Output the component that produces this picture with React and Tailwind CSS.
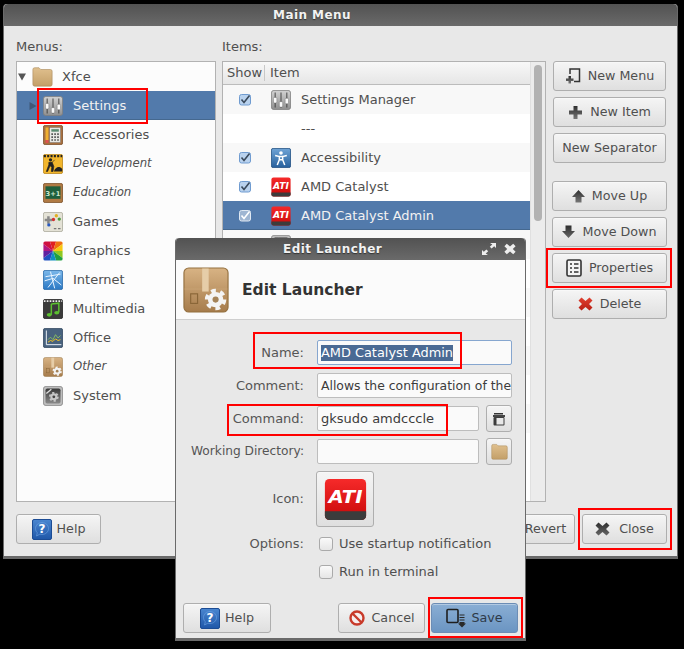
import React from "react";

const Sliders = ({ s = 20 }) => (
  <svg width={s} height={s} viewBox="0 0 24 24">
    <defs><linearGradient id="sl" x1="0" y1="0" x2="0" y2="1"><stop offset="0" stopColor="#d2d2d2" /><stop offset="1" stopColor="#8f8f8f" /></linearGradient></defs>
    <rect x="0.5" y="0.5" width="23" height="23" rx="3" fill="url(#sl)" stroke="#808080" />
    <g stroke="#3c3c3c" strokeWidth="1.1"><path d="M5 3v18M12 3v18M19 3v18" /></g>
    <g fill="#fafafa" stroke="#666" strokeWidth=".5"><rect x="3" y="9" width="4" height="6.500" rx="1" /><rect x="10" y="14" width="4" height="6.500" rx="1" /><rect x="17" y="10" width="4" height="6.500" rx="1" /></g>
  </svg>
);
const Folder = ({ s = 21 }) => (
  <svg width={s} height={s} viewBox="0 0 24 24">
    <defs><linearGradient id="fo" x1="0" y1="0" x2="0" y2="1"><stop offset="0" stopColor="#e0c08e" /><stop offset="1" stopColor="#c39f68" /></linearGradient></defs>
    <path d="M1 4a2 2 0 012-2h5l2 2h11a2 2 0 012 2v15a2 2 0 01-2 2H3a2 2 0 01-2-2z" fill="url(#fo)" stroke="#a98a5c" strokeWidth=".7" />
  </svg>
);
const Accessories = () => (
  <svg width="20" height="20" viewBox="0 0 24 24">
    <rect x=".5" y=".5" width="23" height="23" rx="2" fill="#a8703f" stroke="#7c4f2a" />
    <rect x="8" y="3" width="13" height="18" fill="#e8e8e4" stroke="#666" strokeWidth=".5" />
    <rect x="10" y="5" width="9" height="3" fill="#5a8a70" />
    <path d="M10 10h2v2h-2zM13.5 10h2v2h-2zM17 10h2v2h-2zM10 13.5h2v2h-2zM13.5 13.5h2v2h-2zM17 13.5h2v2h-2zM10 17h2v2h-2zM13.5 17h2v2h-2zM17 17h2v2h-2z" fill="#555" />
    <rect x="3" y="3" width="3.5" height="15" fill="#f0b030" /><rect x="3" y="18" width="3.5" height="3.5" fill="#e05050" />
  </svg>
);
const Development = () => (
  <svg width="20" height="20" viewBox="0 0 24 24">
    <rect x=".5" y=".5" width="23" height="23" rx="2" fill="#f2b62c" stroke="#b8841a" />
    <path d="M1 2.500h22" stroke="#222" strokeWidth="2.500" strokeDasharray="2.500 1.500" />
    <circle cx="9" cy="7" r="2" fill="#222" />
    <path d="M7 10l4 0 2 5-1 6h-2l.5-5-2-2-3 7H4l3-8zM14 7l-6 6" fill="#222" stroke="#222" strokeWidth=".8" />
    <path d="M13 21c2-6 7-7 10-3v3z" fill="#222" />
  </svg>
);
const Education = () => (
  <svg width="20" height="20" viewBox="0 0 24 24">
    <rect x=".5" y=".5" width="23" height="23" rx="2" fill="#b07a44" stroke="#7c5028" />
    <rect x="3" y="4" width="18" height="15" fill="#1f5f3d" />
    <text x="12" y="15" textAnchor="middle" fontSize="8" fontWeight="700" fill="#cfe8cf" fontFamily="'DejaVu Sans'">3+1</text>
  </svg>
);
const Games = () => (
  <svg width="20" height="20" viewBox="0 0 24 24">
    <rect x=".5" y=".5" width="23" height="23" rx="2" fill="#e4e2d6" stroke="#aaa89a" />
    <path d="M5 5h3v3h3v3H8v3H5v-3H2V8h3z" fill="#888" />
    <circle cx="16" cy="4.500" r="2" fill="#e0b020" /><circle cx="19.500" cy="8.500" r="2" fill="#4a9a3a" /><circle cx="12.500" cy="9" r="2" fill="#d03030" /><circle cx="7" cy="15.500" r="2" fill="#2a5ac0" />
    <path d="M13 20h3M18 20h3" stroke="#777" strokeWidth="1.500" />
  </svg>
);
const Graphics = () => {
  const cols = ["#e02020", "#f07010", "#f8c810", "#90c820", "#20a040", "#1090c0", "#2050c0", "#6020a0", "#b01880", "#d01040"];
  const pts = (i) => {
    const a = (i * 36 * Math.PI) / 180, b = ((i + 1) * 36 * Math.PI) / 180;
    return `12,12 ${12 + 24 * Math.cos(a)},${12 + 24 * Math.sin(a)} ${12 + 24 * Math.cos(b)},${12 + 24 * Math.sin(b)}`;
  };
  return (
    <svg width="20" height="20" viewBox="0 0 24 24">
      <defs><clipPath id="gc"><rect x=".5" y=".5" width="23" height="23" rx="2" /></clipPath></defs>
      <g clipPath="url(#gc)">{cols.map((c, i) => <polygon key={i} points={pts(i - 3)} fill={c} />)}</g>
    </svg>
  );
};
const Internet = () => (
  <svg width="20" height="20" viewBox="0 0 24 24">
    <defs><linearGradient id="ig" x1="0" y1="0" x2="0" y2="1"><stop offset="0" stopColor="#7cb8ea" /><stop offset="1" stopColor="#2a78c4" /></linearGradient></defs>
    <rect x=".5" y=".5" width="23" height="23" rx="2" fill="url(#ig)" stroke="#2a6aa8" />
    <path d="M3 8l18-3M9 2l5 20M20 3L6 21M2 13l10-3 10 8" stroke="#e8f4ff" strokeWidth="1.200" fill="none" />
  </svg>
);
const Multimedia = () => (
  <svg width="20" height="20" viewBox="0 0 24 24">
    <rect x=".5" y=".5" width="23" height="23" rx="2" fill="#3a3a3a" stroke="#222" />
    <path d="M1 2.500h22" stroke="#eee" strokeWidth="2" strokeDasharray="2 1.500" />
    <path d="M10 6l9-1v11" stroke="#5cc030" strokeWidth="1.800" fill="none" /><path d="M10 6v13" stroke="#5cc030" strokeWidth="1.800" />
    <ellipse cx="7.500" cy="19" rx="3" ry="2.200" fill="#5cc030" /><ellipse cx="16.500" cy="16.500" rx="3" ry="2.200" fill="#5cc030" />
  </svg>
);
const Office = () => (
  <svg width="20" height="20" viewBox="0 0 24 24">
    <rect x=".5" y=".5" width="23" height="23" rx="2" fill="#48627e" stroke="#324860" />
    <path d="M4 3v17h18" stroke="#e8eef4" strokeWidth="1.200" fill="none" />
    <path d="M6 14l3-3 3 3 3-6 3 4 3-3" stroke="#8fc860" strokeWidth="1" fill="none" />
    <path d="M6 17l3-2 3 1 3-3 3 2 3-1" stroke="#f0c020" strokeWidth="1.200" fill="none" />
  </svg>
);
const Gear = ({ cx, cy, r, c = "#f4f4f4", h = "#a58358" }) => (
  <g>
    <circle cx={cx} cy={cy} r={r} fill={c} />
    <circle cx={cx} cy={cy} r={r * 1.15} fill="none" stroke={c} strokeWidth={r * 0.5} strokeDasharray={`${r * 0.62} ${r * 0.58}`} />
    <circle cx={cx} cy={cy} r={r * 0.4} fill={h} />
  </g>
);
const BoxIcon = ({ s = 20, id = "bx" }) => (
  <svg width={s} height={s} viewBox="0 0 24 24">
    <defs><linearGradient id={id} x1="0" y1="0" x2="0" y2="1"><stop offset="0" stopColor="#d8b384" /><stop offset="1" stopColor="#a67c4c" /></linearGradient></defs>
    <rect x=".5" y=".5" width="23" height="23" rx="2.500" fill={`url(#${id})`} stroke="#94703f" strokeWidth=".6" />
    <path d="M.8 11.500h22.400" stroke="#c8a374" strokeWidth=".5" />
    <rect x="10" y=".8" width="3.400" height="12" fill="#e6cda8" />
    <rect x="4" y="14" width="3.600" height="5" fill="none" stroke="#8a6638" strokeWidth=".6" />
    <Gear cx={17} cy={17} r={4} />
  </svg>
);
const System = () => (
  <svg width="20" height="20" viewBox="0 0 24 24">
    <defs><linearGradient id="sy" x1="0" y1="0" x2="0" y2="1"><stop offset="0" stopColor="#3a3a3a" /><stop offset="1" stopColor="#8a8a8a" /></linearGradient></defs>
    <rect x=".5" y=".5" width="23" height="23" rx="3" fill="#bdbdbd" stroke="#888" />
    <rect x="3" y="3" width="18" height="18" rx="2" fill="url(#sy)" />
    <Gear cx={13} cy={13} r={4.200} c="#c8c8c8" h="#444" />
    <path d="M4 9l6-5" stroke="#ddd" strokeWidth="1.600" />
  </svg>
);
const Accessibility = () => (
  <svg width="20" height="20" viewBox="0 0 24 24">
    <defs><linearGradient id="ac" x1="0" y1="0" x2="0" y2="1"><stop offset="0" stopColor="#6fa4d6" /><stop offset="1" stopColor="#27609c" /></linearGradient></defs>
    <rect x=".5" y=".5" width="23" height="23" rx="2" fill="url(#ac)" stroke="#204f82" />
    <circle cx="12" cy="6" r="2.200" fill="#fff" />
    <path d="M5 9l5 1.200V14l-2.500 6.500M19 9l-5 1.200V14l2.500 6.500M10 14h4M10 10.200h4" stroke="#fff" strokeWidth="1.800" fill="none" />
  </svg>
);
const Ati = ({ s = 20, id = "at" }) => (
  <svg width={s} height={s} viewBox="0 0 24 24">
    <defs><linearGradient id={id} x1="0" y1="0" x2="0" y2="1"><stop offset="0" stopColor="#f62a2a" /><stop offset="1" stopColor="#c80808" /></linearGradient></defs>
    <rect x=".5" y=".5" width="23" height="23" rx="2.500" fill={`url(#${id})`} />
    <path d="M.5 18.500h23V21a2.500 2.500 0 01-2.500 2.500H3A2.500 2.500 0 01.5 21z" fill="#3c3c3c" />
    <text x="2.500" y="14" textLength="19" lengthAdjust="spacingAndGlyphs" fontSize="10" fontWeight="700" fontStyle="italic" fill="#fff" fontFamily="'DejaVu Sans'">ATI</text>
  </svg>
);
const Check = ({ light }) => (
  <svg width="12" height="12" viewBox="0 0 12 12">
    <rect x=".5" y=".5" width="11" height="10.500" rx="2" fill={light ? "#9fb6d2" : "#b9d2ee"} stroke={light ? "#dfe8f2" : "#6f9bd0"} />
    <path d="M2.500 5.500l2.500 3L10.500 1.500" stroke={light ? "#fff" : "#3a4a5c"} strokeWidth="1.600" fill="none" />
  </svg>
);
const DarkGrad = ({ id }) => (
  <defs><linearGradient id={id} x1="0" y1="0" x2="0" y2="1"><stop offset="0" stopColor="#2e2e2e" /><stop offset="1" stopColor="#777" /></linearGradient></defs>
);
const NewMenuIco = () => (
  <svg width="16" height="18" viewBox="0 0 16 18">
    <DarkGrad id="nm" />
    <path d="M5 7V2h9.500v12.500H9" stroke="#333" strokeWidth="1.500" fill="none" />
    <path d="M3.500 9h2.500v2.500h2.500V14H6v2.500H3.500V14H1v-2.500h2.500z" fill="url(#nm)" />
  </svg>
);
const PlusIco = () => (
  <svg width="15" height="15" viewBox="0 0 15 15">
    <DarkGrad id="pl" />
    <path d="M5.500 1h4v4.500H14v4H9.500V14h-4V9.500H1v-4h4.500z" fill="url(#pl)" />
  </svg>
);
const UpIco = () => (
  <svg width="13" height="14" viewBox="0 0 13 14">
    <DarkGrad id="up" />
    <path d="M6.500 1L13 8H9.500v5.500h-6V8H0z" fill="url(#up)" />
  </svg>
);
const DownIco = () => (
  <svg width="13" height="14" viewBox="0 0 13 14">
    <defs><linearGradient id="dn" x1="0" y1="0" x2="0" y2="1"><stop offset="0" stopColor="#2e2e2e" /><stop offset="1" stopColor="#666" /></linearGradient></defs>
    <path d="M3.500 .5h6V6H13L6.500 13 0 6h3.500z" fill="url(#dn)" />
  </svg>
);
const PropsIco = () => (
  <svg width="16" height="18" viewBox="0 0 16 18">
    <rect x="1" y="1" width="14" height="16" rx="1.500" fill="#f4f4f4" stroke="#333" strokeWidth="1.600" />
    <path d="M4 5h2M8 5h4.500M4 9h2M8 9h4.500M4 13h2M8 13h4.500" stroke="#333" strokeWidth="1.600" />
  </svg>
);
const XIco = ({ c1, c2, id }) => (
  <svg width="15" height="14" viewBox="0 0 15 14">
    <defs><linearGradient id={id} x1="0" y1="0" x2="0" y2="1"><stop offset="0" stopColor={c1} /><stop offset="1" stopColor={c2} /></linearGradient></defs>
    <path d="M3.500 .5L7.500 4l4-3.500 3 3L11 7l3.500 3.500-3 3-4-3.500-4 3.500-3-3L4 7 .5 3.500z" fill={`url(#${id})`} />
  </svg>
);
const HelpIco = () => (
  <svg width="20" height="21" viewBox="0 0 20 21">
    <defs><linearGradient id="hp" x1="0" y1="0" x2="0" y2="1"><stop offset="0" stopColor="#4a86d0" /><stop offset="1" stopColor="#1f57a8" /></linearGradient></defs>
    <rect x=".5" y=".5" width="19" height="20" rx="1.500" fill="url(#hp)" stroke="#1c4c94" />
    <path d="M10 3.500c3.600 0 6.500 2.600 6.500 6s-2.900 6-6.500 6c-.8 0-1.500-.1-2.200-.3L4.500 17l.8-3.200C4.200 12.700 3.500 11.200 3.500 9.500c0-3.400 2.900-6 6.500-6z" fill="none" stroke="#6ea4e4" strokeWidth=".6" />
    <text x="10" y="14" textAnchor="middle" fontSize="12" fontWeight="700" fill="#fff" fontFamily="'DejaVu Sans'">?</text>
  </svg>
);
const CancelIco = () => (
  <svg width="16" height="16" viewBox="0 0 16 16">
    <circle cx="8" cy="8" r="6.500" fill="#f6eeee" stroke="#c83a2a" strokeWidth="2.400" />
    <path d="M3.500 3.500l9 9" stroke="#c83a2a" strokeWidth="2.400" />
  </svg>
);
const SaveIco = () => (
  <svg width="20" height="20" viewBox="0 0 20 20">
    <rect x="1" y="1.500" width="11" height="13" rx="1" fill="none" stroke="#1f1f1f" strokeWidth="1.600" />
    <path d="M13.500 7h5M13.500 9.500h5M13.500 12h5" stroke="#2a2a2a" strokeWidth="1.200" />
    <path d="M13.500 14h5v1.500H20l-4 4-4-4h1.500z" fill="#2a2a2a" />
  </svg>
);
const StackIco = () => (
  <svg width="14" height="14" viewBox="0 0 14 14">
    <path d="M2 1h9v1.500H2z" fill="#333" />
    <path d="M1 3h12v2H1z" fill="#444" />
    <rect x="1.500" y="5" width="11" height="8.500" rx="1" fill="#3c3c3c" />
    <rect x="4.500" y="6" width="7" height="6.500" fill="#e8e8e8" />
  </svg>
);
const MaxIco = () => (
  <svg width="16" height="14" viewBox="0 0 16 14">
    <path d="M9 1h6v5l-1.800-1.800-2.600 2.400-1.800-1.800 2.500-2.300zM7 13H1V8l1.800 1.800 2.600-2.400 1.800 1.800-2.500 2.300z" fill="#eee" />
  </svg>
);
const Tri = ({ down }) => (
  <svg width="8" height="8" viewBox="0 0 8 8">
    {down ? <path d="M0 .5h8L4 7.500z" fill="#555" /> : <path d="M.5 0v8L7.500 4z" fill="#3f5878" />}
  </svg>
);

const Btn = ({ icon, children, className = "", gap = "gap-[7px]", blue }) => (
  <div
    className={`flex items-center justify-center rounded-[3px] border text-[12.7px] shadow-[inset_0_1px_0_rgba(255,255,255,.35)] ${gap} ${
      blue ? "border-[#6c8db5] bg-gradient-to-b from-[#8aaed4] to-[#6b95c2] text-[#2e3a48]" : "border-[#aeaeae] bg-gradient-to-b from-[#f5f5f5] to-[#dfdfdf] text-[#4f4f4f]"
    } ${className}`}
  >
    {icon}
    {children && <span>{children}</span>}
  </div>
);

const Entry = ({ className = "", children, focus }) => (
  <div className={`flex h-[25px] items-center overflow-hidden whitespace-nowrap rounded-[2px] border bg-[#fafafa] pl-[3px] text-[#3c3c3c] ${focus ? "border-[#86a6cf]" : "border-[#bdbdbd]"} ${className}`}>
    {children}
  </div>
);

const Label = ({ children, className = "" }) => (
  <div className={`flex items-center justify-end text-[#555] ${className}`}>{children}</div>
);

const TitleBar = ({ title, className = "", children }) => (
  <div className={`relative flex h-[22px] shrink-0 items-center rounded-t-[4px] bg-gradient-to-b from-[#525252] to-[#6a6a6a] text-[12px] font-bold tracking-[0.45px] text-[#f2f2f2] ${className}`}>
    <span className="[text-shadow:0_1px_1px_#333]">{title}</span>
    {children}
  </div>
);

const menus = [
  ["Accessories", <Accessories />],
  ["Development", <Development />, true],
  ["Education", <Education />, true],
  ["Games", <Games />],
  ["Graphics", <Graphics />],
  ["Internet", <Internet />],
  ["Multimedia", <Multimedia />],
  ["Office", <Office />],
  ["Other", <BoxIcon />, true],
  ["System", <System />],
];

const items = [
  [true, <Sliders />, "Settings Manager", "bg-[#f8f8f8]"],
  [false, null, "---", "bg-white"],
  [true, <Accessibility />, "Accessibility", "bg-[#f8f8f8]"],
  [true, <Ati id="at1" />, "AMD Catalyst", "bg-white"],
];

const RedBox = ({ className }) => <div className={`absolute border-2 border-[#f00] ${className}`} />;

export default function App() {
  return (
    <div className="relative h-[649px] w-[684px] overflow-hidden bg-black pl-[3px] pt-[4px] text-[13px] [font-family:'DejaVu_Sans',sans-serif]">
      {/* Main window */}
      <div className="flex h-[555px] w-[675px] flex-col rounded-t-[4px] border-x border-b-[3px] border-[#6a6a6a] bg-[#e8e8e8]">
        <TitleBar title="Main Menu" className="pl-[269px]" />
        <div className="flex min-h-0 flex-1 flex-col pb-[12px] pl-[12px] pr-[10px]">
          <div className="flex min-h-0 flex-1 gap-[6px]">
            <div className="flex w-[200px] flex-col">
              <div className="mb-[6px] mt-[12px] h-[17px] leading-[17px] text-[#4f4f4f]">Menus:</div>
              <div className="flex-1 border border-[#b2b2b2] bg-[#fcfcfc] text-[#4f4f4f]">
                <div className="flex h-[29px] items-center">
                  <span className="ml-[1px] flex w-[14px]"><Tri down /></span>
                  <Folder />
                  <span className="ml-[9px]">Xfce</span>
                </div>
                <div className="flex h-[29px] items-center bg-[#527aab] pl-[12px] text-[#f2f2f2] shadow-[inset_0_-1px_0_#45688f]">
                  <span className="mr-[6px] flex w-[8px]"><Tri /></span>
                  <Sliders />
                  <span className="ml-[10px] mt-[1px]">Settings</span>
                </div>
                {menus.map(([t, ic, it]) => (
                  <div key={t} className="flex h-[29px] items-center pl-[26px]">
                    {ic}
                    <span className={`ml-[10px] ${it ? "text-[11.7px] italic" : ""}`}>{t}</span>
                  </div>
                ))}
              </div>
            </div>
            <div className="flex w-[324px] flex-col">
              <div className="mb-[6px] mt-[12px] h-[17px] leading-[17px] text-[#4f4f4f]">Items:</div>
              <div className="flex flex-1 overflow-hidden border border-[#b2b2b2] bg-[#fcfcfc] text-[#4f4f4f]">
                <div className="flex min-w-0 flex-1 flex-col">
                  <div className="flex h-[23px] items-center border-b border-[#bcbcbc] bg-gradient-to-b from-[#f8f8f8] to-[#e6e6e6]">
                    <span className="w-[42px] border-r border-[#c8c8c8] pl-[4px] leading-[16px]">Show</span>
                    <span className="pl-[5px]">Item</span>
                  </div>
                  {items.map(([c, ic, t, bg]) => (
                    <div key={t} className={`flex h-[29px] items-center ${bg}`}>
                      <span className="mr-[4px] flex w-[44px] justify-center">{c && <Check />}</span>
                      <span className="flex w-[30px]">{ic}</span>
                      <span>{t}</span>
                    </div>
                  ))}
                  <div className="flex h-[29px] items-center bg-[#527aab] text-[#f2f2f2] shadow-[inset_0_-1px_0_#45688f]">
                    <span className="mr-[4px] flex w-[44px] justify-center"><Check light /></span>
                    <span className="flex w-[30px]"><Ati id="at2" /></span>
                    <span>AMD Catalyst Admin</span>
                  </div>
                  <div className="flex h-[29px] items-center bg-[#f8f8f8] pl-[48px]"><System /></div>
                  <div className="h-[29px] bg-white" />
                  <div className="h-[29px] bg-[#f8f8f8]" />
                  <div className="h-[29px] bg-white" />
                  <div className="h-[29px] bg-[#f8f8f8]" />
                  <div className="h-[29px] bg-white" />
                  <div className="h-[29px] bg-[#f8f8f8]" />
                  <div className="flex-1 bg-white" />
                </div>
                <div className="w-[15px] shrink-0 border-l border-[#e0e0e0] bg-[#ececec] pl-[3px] pt-[3px]">
                  <div className="h-[156px] w-[8px] rounded-full bg-[#b2b2b2]" />
                </div>
              </div>
            </div>
            <div className="flex w-[115px] shrink-0 flex-col items-stretch pt-[35px]">
              <Btn icon={<NewMenuIco />} className="mx-[1px] h-[30px]">New Menu</Btn>
              <Btn icon={<PlusIco />} className="mx-[1px] mt-[6px] h-[30px]">New Item</Btn>
              <Btn className="mx-[1px] mt-[6px] h-[30px]">New Separator</Btn>
              <Btn icon={<UpIco />} className="mt-[18px] h-[30px]">Move Up</Btn>
              <Btn icon={<DownIco />} className="mt-[6px] h-[30px]">Move Down</Btn>
              <Btn icon={<PropsIco />} className="mt-[6px] h-[30px]">Properties</Btn>
              <Btn icon={<XIco c1="#e04030" c2="#b81f14" id="xr" />} className="mt-[6px] h-[30px]">Delete</Btn>
            </div>
          </div>
          <div className="mt-[12px] flex h-[30px] justify-between">
            <Btn icon={<HelpIco />} gap="gap-[5px]" className="w-[85px]">Help</Btn>
            <div className="flex gap-[7px]">
              <Btn className="w-[83px] pl-[24px]">Revert</Btn>
              <Btn icon={<XIco c1="#2e2e2e" c2="#666" id="xd" />} gap="gap-[9px]" className="w-[85px]">Close</Btn>
            </div>
          </div>
        </div>
      </div>

      {/* Edit Launcher dialog */}
      <div className="absolute left-[175px] top-[238px] flex h-[403px] w-[351px] flex-col rounded-t-[4px] border-x border-b-[3px] border-[#6a6a6a] bg-[#e8e8e8]">
        <TitleBar title="Edit Launcher" className="pl-[107px]">
          <span className="absolute left-[305px] top-[4px]"><MaxIco /></span>
          <span className="absolute left-[328px] top-[5px]"><svg width="12" height="12" viewBox="0 0 15 14"><path d="M3.500 .5L7.500 4l4-3.500 3 3L11 7l3.500 3.500-3 3-4-3.500-4 3.500-3-3L4 7 .5 3.500z" fill="#eee" /></svg></span>
        </TitleBar>
        <div className="flex h-[60px] shrink-0 items-center gap-[13px] border-b border-[#cfcfcf] bg-[#fbfbfb] pl-[7px]">
          <BoxIcon s={46} id="bx2" />
          <span className="mt-[2px] text-[15.5px] font-bold text-[#333]">Edit Launcher</span>
        </div>
        <div className="grid grid-cols-[128px_1fr] gap-x-[13px] gap-y-[8px] pr-[14px] pt-[20px]">
          <Label className="h-[25px]">Name:</Label>
          <Entry focus><span className="h-[16px] bg-[#4a6a94] text-[12.9px] leading-[16px] text-white">AMD Catalyst Admin</span></Entry>
          <Label className="h-[25px]">Comment:</Label>
          <Entry><span className="mt-[1px] text-[12.4px]">Allows the configuration of the</span></Entry>
          <Label className="h-[25px]">Command:</Label>
          <div className="flex h-[25px] items-center gap-[7px]">
            <Entry className="w-[162px]">gksudo amdcccle</Entry>
            <Btn icon={<StackIco />} className="h-[27px] w-[26px] shrink-0" />
          </div>
          <Label className="h-[25px] text-[12.2px]">Working Directory:</Label>
          <div className="flex h-[25px] items-center gap-[7px]">
            <Entry className="w-[162px]" />
            <Btn icon={<Folder s={17} />} className="h-[27px] w-[26px] shrink-0" />
          </div>
          <Label className="mt-[-1px] h-[56px]">Icon:</Label>
          <div className="mt-[-1px]">
            <Btn icon={<Ati s={43} id="at3" />} className="ml-[-1px] h-[56px] w-[58px]" />
          </div>
        </div>
        <div className="grid grid-cols-[128px_1fr] gap-x-[13px] pt-[3px]">
          <Label className="h-[28px]">Options:</Label>
          <div className="flex h-[28px] items-center gap-[6px] pl-[2px] text-[#4f4f4f]">
            <span className="h-[14px] w-[14px] rounded-[3px] border border-[#aaa] bg-gradient-to-b from-[#fafafa] to-[#e6e6e6]" />
            Use startup notification
          </div>
          <div />
          <div className="flex h-[28px] items-center gap-[6px] pl-[2px] text-[#4f4f4f]">
            <span className="h-[14px] w-[14px] rounded-[3px] border border-[#aaa] bg-gradient-to-b from-[#fafafa] to-[#e6e6e6]" />
            Run in terminal
          </div>
        </div>
        <div className="mb-[5px] mt-auto flex h-[30px] gap-[6px] px-[7px]">
          <Btn icon={<HelpIco />} gap="gap-[5px]" className="w-[88px]">Help</Btn>
          <div className="flex-1" />
          <Btn icon={<CancelIco />} className="w-[87px]">Cancel</Btn>
          <Btn icon={<SaveIco />} gap="gap-[5px]" blue className="w-[87px]">Save</Btn>
        </div>
      </div>

      <RedBox className="left-[37px] top-[88px] h-[36px] w-[111px]" />
      <RedBox className="left-[546px] top-[248px] h-[40px] w-[126px]" />
      <RedBox className="left-[578px] top-[508px] h-[42px] w-[94px]" />
      <RedBox className="left-[253px] top-[332px] h-[37px] w-[209px]" />
      <RedBox className="left-[227px] top-[404px] h-[32px] w-[221px]" />
      <RedBox className="left-[428px] top-[597px] h-[41px] w-[95px]" />
    </div>
  );
}
